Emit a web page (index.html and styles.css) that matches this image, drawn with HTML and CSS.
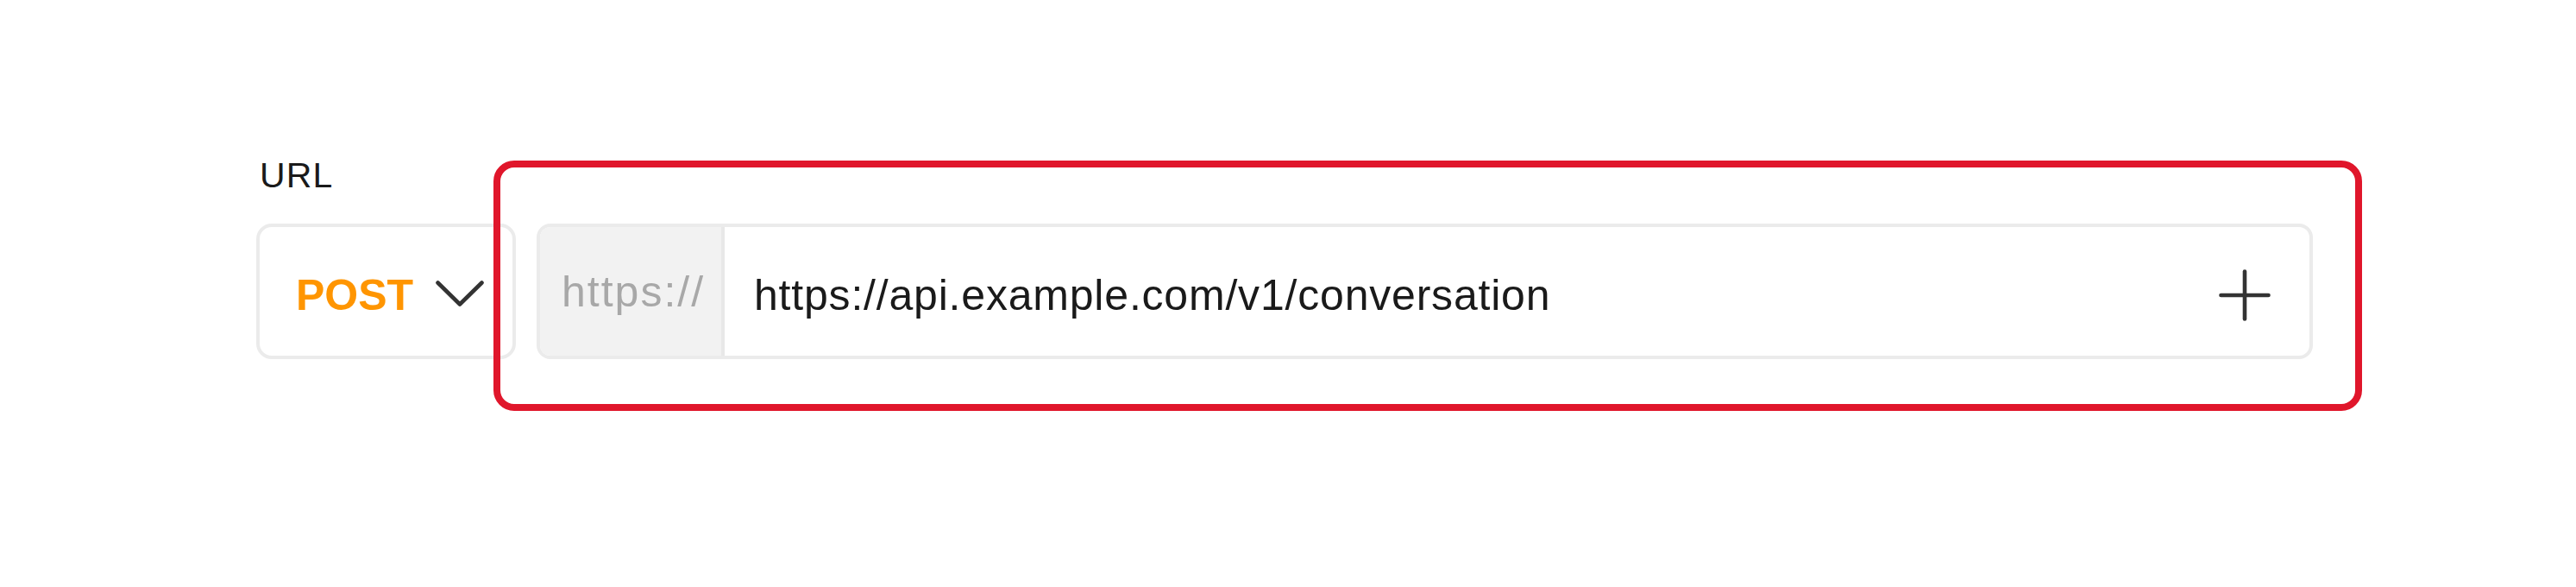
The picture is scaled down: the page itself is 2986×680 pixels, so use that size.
FILE: index.html
```html
<!DOCTYPE html>
<html lang="en">
<head>
<meta charset="utf-8">
<title>URL</title>
<link rel="stylesheet" href="styles.css">
</head>
<body>
<div class="page">
  <div class="field">
    <div class="label">URL</div>
    <div class="row">
      <div class="method">
        <span class="method-name">POST</span>
        <svg class="chevron" width="56" height="30" viewBox="0 0 56 30"><polyline points="2.5,2.5 28,27.5 53.5,2.5" fill="none" stroke="#333" stroke-width="4.6" stroke-linecap="round" stroke-linejoin="round"/></svg>
      </div>
      <div class="url-input">
        <div class="prefix">https://</div>
        <div class="url-text">https://api.example.com/v1/conversation</div>
        <div class="add">
          <svg width="60" height="60" viewBox="0 0 60 60"><line x1="2.5" y1="30" x2="57.5" y2="30" stroke="#333" stroke-width="4.6" stroke-linecap="round"/><line x1="30" y1="2.5" x2="30" y2="57.5" stroke="#333" stroke-width="4.6" stroke-linecap="round"/></svg>
        </div>
      </div>
    </div>
  </div>
  <div class="highlight"></div>
</div>
</body>
</html>
```

FILE: styles.css
```css
html, body {
  margin: 0;
  padding: 0;
  background: #ffffff;
}
body {
  font-family: "Liberation Sans", Arial, sans-serif;
  color: #1a1a1a;
  width: 2986px;
  height: 680px;
  overflow: hidden;
}
.page {
  position: relative;
  width: 2986px;
  height: 680px;
}
.field {
  padding-top: 183px;
  padding-left: 297px;
}
.label {
  font-size: 41px;
  line-height: 41px;
  letter-spacing: 1.2px;
  padding-left: 4px;
  color: #1a1a1a;
  height: 41px;
  margin-bottom: 35px;
}
.row {
  display: flex;
  gap: 24px;
}
.method {
  box-sizing: border-box;
  width: 301px;
  height: 157px;
  border: 4px solid #ebebeb;
  border-radius: 18px;
  display: flex;
  align-items: center;
  padding-left: 42px;
  padding-top: 9px;
}
.method-name {
  font-size: 50px;
  font-weight: bold;
  color: #ff9500;
}
.chevron {
  margin-left: 26px;
  margin-bottom: 5px;
  display: block;
}
.url-input {
  box-sizing: border-box;
  width: 2059px;
  height: 157px;
  border: 4px solid #ebebeb;
  border-radius: 16px;
  display: flex;
  align-items: stretch;
  overflow: hidden;
}
.prefix {
  width: 185px;
  padding-left: 25px;
  background: #f2f2f2;
  border-right: 4px solid #e8e8e8;
  display: flex;
  align-items: center;
  font-size: 50px;
  letter-spacing: 2px;
  color: #a8a8a8;
}
.url-text {
  flex: 1;
  display: flex;
  align-items: center;
  padding-left: 34px;
  padding-top: 9px;
  font-size: 50px;
  letter-spacing: 0.8px;
  color: #1a1a1a;
}
.add {
  display: flex;
  align-items: center;
  padding-right: 45px;
  padding-top: 9px;
}
.add svg {
  display: block;
}
.highlight {
  position: absolute;
  left: 572px;
  top: 186px;
  width: 2166px;
  height: 290px;
  box-sizing: border-box;
  border: 8px solid #e0162b;
  border-radius: 24px;
  pointer-events: none;
}
```
